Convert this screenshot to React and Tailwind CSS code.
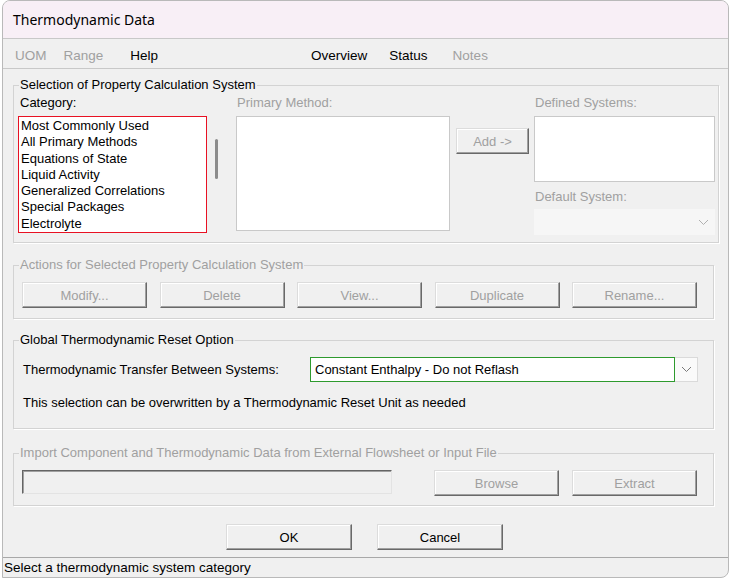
const SANS = { fontFamily: '"Liberation Sans", Arial, sans-serif' }

const categories = [
  'Most Commonly Used',
  'All Primary Methods',
  'Equations of State',
  'Liquid Activity',
  'Generalized Correlations',
  'Special Packages',
  'Electrolyte',
]

function Chevron({ className = '' }) {
  return (
    <svg width="11" height="7" viewBox="0 0 11 7" className={className}>
      <path d="M1 1 L5.5 5.5 L10 1" fill="none" stroke="currentColor" strokeWidth="1" />
    </svg>
  )
}

function WinButton({ children, disabled, className = '' }) {
  return (
    <button
      className={`h-[26px] bg-[#f0f0f0] border border-[#dcdcdc] border-r-[#696969] border-b-[#696969] shadow-[inset_-1px_-1px_0_#a0a0a0,inset_1px_1px_0_#ffffff] text-[13px] leading-none ${
        disabled ? 'text-[#a0a0a0]' : 'text-black'
      } ${className}`}
    >
      {children}
    </button>
  )
}

function Group({ title, dim, className = '', children }) {
  return (
    <fieldset className={`border border-[#d3d3d3] shadow-[1px_1px_0_#ffffff] ${className}`}>
      <legend className={`ml-[5px] px-[1px] text-[13px] leading-[16px] ${dim ? 'text-[#a0a0a0]' : 'text-black'}`}>
        {title}
      </legend>
      {children}
    </fieldset>
  )
}

export default function App() {
  return (
    <div className="w-[730px] h-[578px] bg-white overflow-hidden" style={SANS}>
      <div className="ml-[2px] w-[727px] h-[578px] flex flex-col bg-[#f0f0f0] border border-[#b9b9b9] rounded-t-[8px] rounded-br-[8px] overflow-hidden">
        {/* title bar */}
        <div
          className="h-[38px] shrink-0 bg-[#f8eff6] border-b border-[#c8c8c8] flex items-center pl-[10px] text-[14px] text-black"
          style={{ fontFamily: '"Noto Sans", "Open Sans", sans-serif' }}
        >
          Thermodynamic Data
        </div>

        {/* menu */}
        <div className="h-[30px] shrink-0 border-b border-[#c8c8c8] flex items-center text-[13.5px] pt-[6px]">
          <span className="ml-[12px] text-[#a0a0a0]">UOM</span>
          <span className="ml-[17px] text-[#a0a0a0]">Range</span>
          <span className="ml-[27px] text-black">Help</span>
          <span className="ml-[153px] text-black">Overview</span>
          <span className="ml-[22px] text-black">Status</span>
          <span className="ml-[25px] text-[#a0a0a0]">Notes</span>
        </div>

        <div className="flex flex-col pl-[10px] text-[13px]">
          {/* selection */}
          <Group title="Selection of Property Calculation System" className="mt-[8px] w-[706px]">
            <div className="flex items-start pt-[2px] pb-[7px] pl-[4px]">
              <div className="flex flex-col">
                <div className="ml-[2px] leading-[16px] text-black">Category:</div>
                <div className="mt-[5px] w-[189px] h-[117px] bg-white border border-[#e81123] pl-[2px] pt-[1px] text-[13px] leading-[16.3px] text-black">
                  {categories.map((c) => (
                    <div key={c} className="whitespace-nowrap">{c}</div>
                  ))}
                </div>
              </div>
              <div className="ml-[8px] mt-[44px] w-[3px] h-[40px] rounded-full bg-[#8c8c8c]" />
              <div className="ml-[18px] flex flex-col">
                <div className="ml-[1px] leading-[16px] text-[#a0a0a0]">Primary Method:</div>
                <div className="mt-[5px] w-[214px] h-[115px] bg-white border border-[#c9c9c9]" />
              </div>
              <WinButton disabled className="ml-[6px] mt-[33px] w-[73px]">Add -&gt;</WinButton>
              <div className="ml-[5px] flex flex-col">
                <div className="ml-[1px] leading-[16px] text-[#a0a0a0]">Defined Systems:</div>
                <div className="mt-[5px] w-[181px] h-[66px] bg-white border border-[#c9c9c9]" />
                <div className="mt-[7px] ml-[1px] leading-[16px] text-[#a0a0a0]">Default System:</div>
                <div className="mt-[4px] w-[181px] h-[26px] bg-[#f6f6f6] flex items-center justify-end pr-[6px] text-[#b0b0b0]">
                  <Chevron />
                </div>
              </div>
            </div>
          </Group>

          {/* actions */}
          <Group title="Actions for Selected Property Calculation System" dim className="mt-[14px] w-[701px]">
            <div className="flex gap-[12.5px] pt-[9px] pb-[10px] pl-[8px]">
              {['Modify...', 'Delete', 'View...', 'Duplicate', 'Rename...'].map((b) => (
                <WinButton key={b} disabled className="w-[125px]">{b}</WinButton>
              ))}
            </div>
          </Group>

          {/* global reset */}
          <Group title="Global Thermodynamic Reset Option" className="mt-[13px] w-[701px]">
            <div className="pt-[9px] pb-[17px] pl-[9px] flex flex-col">
              <div className="flex items-center">
                <span className="w-[287px] text-black">Thermodynamic Transfer Between Systems:</span>
                <div className="flex h-[25px]">
                  <div className="w-[365px] h-[25px] bg-white border border-[#2e9a2e] flex items-center pl-[4px] text-black">
                    Constant Enthalpy - Do not Reflash
                  </div>
                  <div className="w-[23px] h-[25px] bg-[#fafafa] border border-l-0 border-[#dadada] flex items-center justify-center text-[#7a7a7a]">
                    <Chevron />
                  </div>
                </div>
              </div>
              <div className="mt-[13px] leading-[16px] text-black">
                This selection can be overwritten by a Thermodynamic Reset Unit as needed
              </div>
            </div>
          </Group>

          {/* import */}
          <Group
            title="Import Component and Thermodynamic Data from External Flowsheet or Input File"
            dim
            className="mt-[16px] w-[701px]"
          >
            <div className="flex items-start pt-[9px] pb-[9px] pl-[8px]">
              <div className="w-[370px] h-[24px] bg-[#f0f0f0] border border-[#e3e3e3] border-t-[#646464] border-l-[#646464] shadow-[inset_1px_1px_0_#a0a0a0]" />
              <WinButton disabled className="ml-[42px] w-[125px]">Browse</WinButton>
              <WinButton disabled className="ml-[13px] w-[125px]">Extract</WinButton>
            </div>
          </Group>
        </div>

        {/* ok / cancel */}
        <div className="mt-[18px] flex justify-center gap-[25px] pr-[2px]">
          <WinButton className="w-[126px]">OK</WinButton>
          <WinButton className="w-[126px]">Cancel</WinButton>
        </div>

        {/* status bar */}
        <div className="mt-[7px] flex-1 border-t border-[#a8a8a8] pl-[1px] flex items-center text-[13.5px] text-black">
          Select a thermodynamic system category
        </div>
      </div>
    </div>
  )
}
